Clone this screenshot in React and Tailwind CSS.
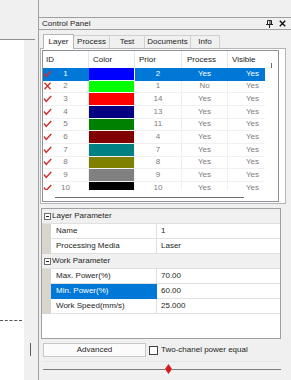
import React from 'react';

const layers = [
  { id: 1, color: '#0000ff', prior: 2, process: 'Yes', visible: 'Yes', on: true },
  { id: 2, color: '#00ff00', prior: 1, process: 'No', visible: 'Yes', on: false },
  { id: 3, color: '#ff0000', prior: 14, process: 'Yes', visible: 'Yes', on: true },
  { id: 4, color: '#000080', prior: 13, process: 'Yes', visible: 'Yes', on: true },
  { id: 5, color: '#008000', prior: 11, process: 'Yes', visible: 'Yes', on: true },
  { id: 6, color: '#800000', prior: 4, process: 'Yes', visible: 'Yes', on: true },
  { id: 7, color: '#008080', prior: 7, process: 'Yes', visible: 'Yes', on: true },
  { id: 8, color: '#808000', prior: 8, process: 'Yes', visible: 'Yes', on: true },
  { id: 9, color: '#808080', prior: 9, process: 'Yes', visible: 'Yes', on: true },
  { id: 10, color: '#000000', prior: 10, process: 'Yes', visible: 'Yes', on: true },
];

const params = [
  { group: 'Layer Parameter', rows: [['Name', '1'], ['Processing Media', 'Laser']] },
  { group: 'Work Parameter', rows: [['Max. Power(%)', '70.00'], ['Min. Power(%)', '60.00'], ['Work Speed(mm/s)', '25.000']] },
];

const Check = () => (
  <svg width="9" height="8" viewBox="0 0 9 8">
    <path d="M1 3.5 L3.2 6.5 L8.2 1" fill="none" stroke="#d42a2a" strokeWidth="1.4" />
  </svg>
);

const Cross = () => (
  <svg width="9" height="8" viewBox="0 0 9 8">
    <path d="M1.5 0.8 L7.5 7.2 M7.5 0.8 L1.5 7.2" fill="none" stroke="#d42a2a" strokeWidth="1.3" />
  </svg>
);

const Minus = () => (
  <svg width="7" height="7" viewBox="0 0 7 7">
    <rect x="0.5" y="0.5" width="6" height="6" fill="#fff" stroke="#6e6e6e" />
    <path d="M2 3.5 H5" stroke="#222" />
  </svg>
);

export default function App() {
  return (
    <div className="w-[291px] h-[380px] overflow-hidden bg-[#f0f0f0] flex font-['Liberation_Sans',Arial,sans-serif] text-[8px] leading-none text-[#1e1e1e]">
      {/* workspace edge */}
      <div className="w-[38px] shrink-0 flex flex-col">
        <div className="h-[39px] shrink-0" />
        <div className="h-px w-[35px] shrink-0 bg-[#8e8e8e]" />
        <div className="flex-1 flex">
          <div className="w-[24px] bg-white flex flex-col">
            <div className="h-[280px] shrink-0" />
            <div className="w-[22px] border-t border-dashed border-[#555]" />
          </div>
          <div className="flex-1 flex flex-col">
            <div className="h-[303px] shrink-0" />
            <div className="ml-[6px] w-px h-[13px] shrink-0 bg-[#5e5e5e]" />
          </div>
        </div>
      </div>

      {/* control panel */}
      <div className="w-[253px] shrink-0 flex flex-col pt-[17px] border-l border-[#a0a0a0]">
        <div className="h-[13px] shrink-0 border-y border-[#a0a0a0] bg-[#f0f0f0] flex items-center justify-between pl-[3px] pr-[5px]">
          <span className="text-[#222]">Control Panel</span>
          <div className="flex items-center gap-[6px]">
            <svg width="7" height="8" viewBox="0 0 7 8">
              <path d="M1.5 0.5 H5.5 V4.5 H1.5 Z M0 4.5 H7 M3.5 4.5 V8" fill="none" stroke="#222" strokeWidth="1" />
              <path d="M4 1 V4.5" stroke="#222" />
            </svg>
            <svg width="7" height="7" viewBox="0 0 7 7">
              <path d="M0.8 0.8 L6.2 6.2 M6.2 0.8 L0.8 6.2" stroke="#111" strokeWidth="1.4" />
            </svg>
          </div>
        </div>

        {/* tabs */}
        <div className="h-[18px] shrink-0 flex items-end pl-[4px]">
          <div className="w-[31px] h-[15px] bg-white border-x border-t border-[#b5b5b5] flex items-center justify-center relative top-px">Layer</div>
          <div className="w-[36px] h-[13px] border-t border-r border-[#d0d0d0] flex items-center justify-center">Process</div>
          <div className="w-[35px] h-[13px] border-t border-r border-[#d0d0d0] flex items-center justify-center">Test</div>
          <div className="w-[46px] h-[13px] border-t border-r border-[#d0d0d0] flex items-center justify-center">Documents</div>
          <div className="w-[29px] h-[13px] border-t border-r border-[#d0d0d0] flex items-center justify-center">Info</div>
        </div>

        {/* tab page */}
        <div className="ml-[1px] w-[246px] h-[156px] shrink-0 bg-white border border-[#b5b5b5] pl-px pt-px">
          <div className="w-[237px] h-[152px] border border-[#8a8f98] bg-white flex flex-col">
            <div className="flex h-[17px] shrink-0 text-[#222]">
              <div className="w-[46px] pl-[3px] flex items-center border-r border-[#e6e6e6]">ID</div>
              <div className="w-[46px] pl-[4px] flex items-center border-r border-[#e6e6e6]">Color</div>
              <div className="w-[47px] pl-[4px] flex items-center border-r border-[#e6e6e6]">Prior</div>
              <div className="w-[46px] pl-[5px] flex items-center border-r border-[#e6e6e6]">Process</div>
              <div className="w-[37px] pl-[4px] flex items-center">Visible</div>
              <div className="flex-1 flex justify-center pt-[12px]">
                <div className="w-px h-[12px] bg-[#707070]" />
              </div>
            </div>
            <div className="h-[122px] shrink-0 overflow-hidden">
              {layers.map((l) => {
                const sel = l.id === 1;
                const txt = sel ? 'text-white' : 'text-[#7c7c7c]';
                return (
                  <div key={l.id} className={`flex h-[12.67px] ${sel ? 'bg-[#0078d7]' : ''}`}>
                    <div className={`w-[46px] flex items-center border-b border-r ${sel ? 'border-[#0078d7]' : 'border-[#f0f0f0]'}`}>
                      <div className="w-[9px] flex items-center justify-center">{l.on ? <Check /> : <Cross />}</div>
                      <span className={`flex-1 text-center pr-[9px] ${txt}`}>{l.id}</span>
                    </div>
                    <div className="w-[46px] border-b border-r border-[#f4f4f4]" style={{ backgroundColor: l.color }} />
                    <div className={`w-[47px] flex items-center justify-center border-b border-r ${sel ? 'border-[#0078d7]' : 'border-[#f0f0f0]'} ${txt}`}>{l.prior}</div>
                    <div className={`w-[46px] flex items-center justify-center border-b border-r ${sel ? 'border-[#0078d7]' : 'border-[#f0f0f0]'} ${txt}`}>{l.process}</div>
                    <div className={`w-[37px] flex items-center justify-end pr-[6px] border-b ${sel ? 'border-[#0078d7]' : 'border-[#f0f0f0]'} ${txt}`}>{l.visible}</div>
                    <div className="flex-1 bg-white" />
                  </div>
                );
              })}
            </div>
            <div className="flex-1 flex items-center pl-[12px] pt-[3px]">
              <div className="w-[189px] h-px bg-[#6f6f6f]" />
            </div>
          </div>
        </div>

        {/* property grid */}
        <div className="ml-[2px] mt-[4px] w-[240px] h-[131px] shrink-0 border border-[#a0a0a0] bg-white">
          {params.map((g) => (
            <div key={g.group}>
              <div className="h-[15px] bg-[#f0f0f0] flex items-center gap-[1px] pl-[2px] border-b border-[#e0e0e0]">
                <Minus />
                <span>{g.group}</span>
              </div>
              {g.rows.map(([name, value]) => {
                const sel = name === 'Min. Power(%)';
                return (
                  <div key={name} className="h-[15px] flex">
                    <div className="w-[9px] bg-[#d8d5cd]" />
                    <div className={`w-[106px] flex items-center pl-[5px] border-r border-b ${sel ? 'bg-[#0078d7] text-white border-[#0078d7]' : 'border-[#e0e0e0]'}`}>{name}</div>
                    <div className="flex-1 flex items-center pl-[4px] border-b border-[#e0e0e0]">{value}</div>
                  </div>
                );
              })}
            </div>
          ))}
        </div>

        {/* advanced + checkbox */}
        <div className="ml-[4px] mt-[4px] flex items-center h-[14px] shrink-0">
          <div className="w-[103px] h-[14px] border border-[#c8c8c8] bg-[#fbfbfb] flex items-center justify-center">Advanced</div>
          <div className="ml-[3px] w-[9px] h-[9px] border border-[#444] bg-white" />
          <span className="ml-[3px]">Two-chanel power equal</span>
        </div>
        <div className="ml-[4px] mt-[4px] w-[238px] h-px bg-[#e4e4e4]" />

        {/* slider */}
        <div className="ml-[4px] mt-[2px] w-[238px] h-[10px] flex items-center">
          <div className="w-[122px] h-px bg-[#7c7c7c]" />
          <svg width="7" height="10" viewBox="0 0 7 10" className="shrink-0">
            <path d="M3.5 0 L7 5 L3.5 10 L0 5 Z" fill="#d41c1c" />
          </svg>
          <div className="flex-1 h-px bg-[#7c7c7c]" />
        </div>
      </div>
    </div>
  );
}
